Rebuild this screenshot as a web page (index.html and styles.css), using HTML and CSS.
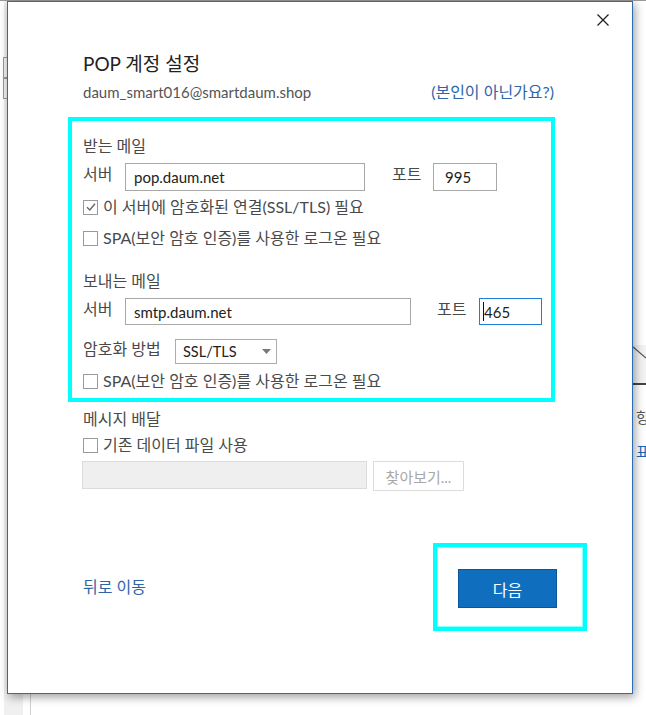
FILE: index.html
```html
<!DOCTYPE html>
<html lang="ko">
<head>
<meta charset="utf-8">
<title>POP 계정 설정</title>
<link rel="stylesheet" href="styles.css">
</head>
<body>
<div class="desk">
  <div class="side"><div class="side-tab"></div><div class="side-tab"></div></div>
  <div class="vline"></div>
  <div class="rpane">
    <div class="rbox"><svg width="13" height="38" viewBox="0 0 13 38"><line x1="0" y1="2" x2="13" y2="13" stroke="#555" stroke-width="1.2"/></svg></div>
    <div class="rtext">항목</div>
    <div class="rtext blue">표시</div>
  </div>
</div>

<div class="dialog">
  <div class="close"><svg width="12" height="12" viewBox="0 0 12 12"><path d="M0.5 0.5 L11.5 11.5 M11.5 0.5 L0.5 11.5" stroke="#222" stroke-width="1.3" fill="none"/></svg></div>
  <div class="head">
    <h1 class="title">POP 계정 설정</h1>
    <div class="acct"><span class="email">daum_smart016@smartdaum.shop</span><span class="link">(본인이 아닌가요?)</span></div>
  </div>

  <div class="hl-box">
    <div class="sec">받는 메일</div>
    <div class="row r1">
      <span class="lbl">서버</span>
      <div class="field w240">pop.daum.net</div>
      <span class="lbl port1">포트</span>
      <div class="field w64 ml9">995</div>
    </div>
    <div class="cb-row cb1"><span class="cb"><svg width="12" height="12" viewBox="0 0 12 12"><path d="M2 6.2 L4.8 9 L10 2.8" stroke="#666" stroke-width="1.4" fill="none"/></svg></span><span class="cbl">이 서버에 암호화된 연결(SSL/TLS) 필요</span></div>
    <div class="cb-row cb2"><span class="cb"></span><span class="cbl">SPA(보안 암호 인증)를 사용한 로그온 필요</span></div>

    <div class="sec sec2">보내는 메일</div>
    <div class="row r2">
      <span class="lbl">서버</span>
      <div class="field w286">smtp.daum.net</div>
      <span class="lbl port2">포트</span>
      <div class="field focus w63 ml10"><span class="caret"></span>465</div>
    </div>
    <div class="row r3">
      <span class="lbl">암호화 방법</span>
      <div class="select">SSL/TLS<svg class="tri" width="9" height="5" viewBox="0 0 9 5"><path d="M0 0 H9 L4.5 5 Z" fill="#7a7a7a"/></svg></div>
    </div>
    <div class="cb-row cb3"><span class="cb"></span><span class="cbl">SPA(보안 암호 인증)를 사용한 로그온 필요</span></div>
  </div>

  <div class="msg">
    <div class="sec">메시지 배달</div>
    <div class="cb-row cb4"><span class="cb"></span><span class="cbl">기존 데이터 파일 사용</span></div>
    <div class="file-row">
      <div class="field disabled"></div>
      <div class="browse">찾아보기...</div>
    </div>
  </div>

  <div class="footer">
    <span class="link back">뒤로 이동</span>
    <div class="hl-box2"><div class="btn">다음</div></div>
  </div>
</div>
</body>
</html>
```
FILE: styles.css
```css
html, body {
  margin: 0;
  padding: 0;
}
body {
  width: 646px;
  height: 715px;
  overflow: hidden;
  position: relative;
  background: #ffffff;
  font-family: "Lato", "Noto Sans CJK KR", sans-serif;
  font-size: 16px;
  color: #444;
}

/* background application */
.desk {
  display: flex;
  height: 715px;
  border-top: 1px solid #9a9a9a;
  box-sizing: border-box;
}
.side {
  width: 19px;
  margin-left: 4px;
  background: #f0f0f0;
  display: flex;
  flex-direction: column;
  padding-top: 56px;
}
.side-tab {
  width: 4px;
  height: 19px;
  margin-left: -1px;
  border: 1px solid #9a9a9a;
  border-right: none;
}
.vline {
  margin-left: 7px;
  width: 1px;
  background: #d0d0d0;
}
.rpane {
  margin-left: auto;
  width: 13px;
  overflow: hidden;
  padding-top: 344px;
}
.rbox {
  height: 38px;
  background: #f3f3f3;
  border-bottom: 2px solid #444;
}
.rbox svg { display: block; }
.rtext {
  font-family: "Noto Sans CJK KR", sans-serif;
  font-size: 15px;
  line-height: 20px;
  white-space: nowrap;
  color: #555;
  margin-left: 3px;
  margin-top: 22px;
}
.rtext.blue { color: #1a66b8; margin-top: 14px; }

/* dialog */
.dialog {
  position: absolute;
  left: 7px;
  top: 1px;
  width: 626px;
  height: 693px;
  box-sizing: border-box;
  background: #fff;
  border: 1px solid #2b6db5;
  box-shadow: 2px 3px 9px rgba(0, 0, 0, 0.38);
  padding: 49px 45px 0 60px;
}
.close {
  position: absolute;
  top: 12px;
  right: 23px;
  width: 12px;
  height: 12px;
}
.close svg { display: block; }

.head { padding-left: 15px; }
.title {
  margin: 0;
  font-weight: normal;
  font-size: 19px;
  line-height: 26px;
  color: #222;
}
.acct {
  margin-top: 5px;
  display: flex;
  justify-content: space-between;
  align-items: center;
  width: 471px;
  line-height: 20px;
}
.email { color: #555; font-size: 15px; }
.link { color: #2e65a8; font-size: 16px; }

.hl-box {
  width: 487px;
  height: 285px;
  box-sizing: border-box;
  margin-top: 15px;
  border: 4px solid #00ffff;
  padding: 15px 0 0 11px;
}
.sec {
  line-height: 20px;
  color: #4a4a4a;
}
.sec2 { margin-top: 23px; }

.row {
  display: flex;
  align-items: flex-start;
}
.r1 { margin-top: 7px; height: 28px; }
.r2 { margin-top: 7px; height: 27px; }
.r3 { margin-top: 14px; height: 25px; }
.lbl {
  line-height: 22px;
  color: #4a4a4a;
  width: 42px;
  flex: none;
}
.r3 .lbl { width: 92px; line-height: 20px; }
.port1 { width: 32px; margin-left: 27px; }
.port2 { width: 32px; margin-left: 26px; }

.field {
  box-sizing: border-box;
  height: 100%;
  border: 1px solid #a8a8a8;
  padding-left: 8px;
  font-size: 15px;
  line-height: 26px;
  color: #222;
  display: flex;
  align-items: center;
  flex: none;
}
.w240 { width: 240px; }
.w64 { width: 64px; padding-left: 11px; }
.w286 { width: 286px; }
.w63 { width: 63px; padding-left: 3px; }
.ml9 { margin-left: 9px; }
.ml10 { margin-left: 10px; }
.focus { border-color: #1f7fd8; }
.caret {
  display: inline-block;
  width: 1px;
  height: 19px;
  background: #111;
}

.select {
  box-sizing: border-box;
  width: 102px;
  height: 25px;
  border: 1px solid #adadad;
  display: flex;
  align-items: center;
  padding-left: 7px;
  font-size: 14.5px;
  color: #222;
}
.tri { margin-left: auto; margin-right: 5px; }

.cb-row {
  display: flex;
  align-items: center;
  height: 20px;
}
.cb1 { margin-top: 6px; }
.cb2 { margin-top: 11px; }
.cb3 { margin-top: 7px; }
.cb {
  box-sizing: border-box;
  width: 15px;
  height: 15px;
  border: 1px solid #9a9a9a;
  background: #fff;
  flex: none;
  display: flex;
  align-items: center;
  justify-content: center;
}
.cb svg { display: block; }
.cbl {
  margin-left: 5px;
  line-height: 20px;
  color: #4a4a4a;
}

.msg { padding-left: 15px; margin-top: 7px; }
.cb4 { margin-top: 6px; }
.file-row {
  display: flex;
  margin-top: 6px;
  margin-left: -1px;
  align-items: flex-start;
}
.field.disabled {
  width: 285px;
  height: 28px;
  background: #efefef;
  border-color: #dcdcdc;
}
.browse {
  box-sizing: border-box;
  width: 91px;
  height: 30px;
  margin-left: 6px;
  border: 1px solid #dcdcdc;
  color: #a8a8a8;
  font-size: 15px;
  display: flex;
  align-items: center;
  justify-content: center;
}

.footer {
  margin-top: 52px;
  display: flex;
  align-items: center;
  justify-content: space-between;
}
.back {
  padding-left: 15px;
  line-height: 20px;
}
.hl-box2 {
  box-sizing: border-box;
  width: 154px;
  height: 88px;
  border: 4px solid #00ffff;
  box-shadow: inset 0 0 0 1px #8affff;
  padding: 22px 26px 0 21px;
}
.btn {
  box-sizing: border-box;
  width: 99px;
  height: 39px;
  background: #106ebe;
  border: 1px solid #0a559c;
  color: #fff;
  display: flex;
  align-items: center;
  justify-content: center;
}
```
